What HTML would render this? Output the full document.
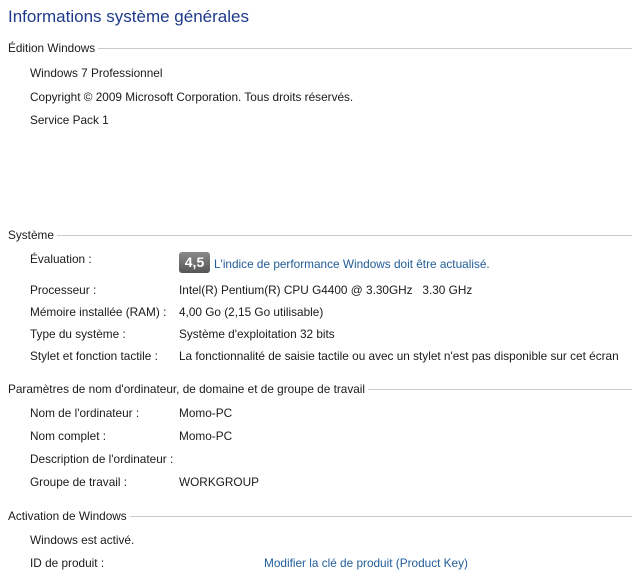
<!DOCTYPE html>
<html><head><meta charset="utf-8"><style>
body{margin:0;width:632px;height:584px;background:#fff;position:relative;overflow:hidden;font-family:"Liberation Sans",sans-serif;font-size:11.8px;color:#1a1a1a}
div{position:absolute;white-space:nowrap;line-height:14px}
.t{left:8px;top:6px;font-size:17px;color:#1e3a8a;line-height:22px}
.h{left:8px;background:#fff;padding-right:3px}
.ln{left:8px;right:0;height:1px;background:#c9ccd2}
.l{left:30px}.v{left:179px}
.a{color:#1f5c99}
.badge{left:179px;top:252px;width:31px;height:21px;background:linear-gradient(#8a8a8a,#555);border-radius:3px;color:#fff;font-weight:bold;font-size:14px;line-height:21px;text-align:center}
</style></head><body>
<div class="t">Informations système générales</div>
<div class="ln" style="top:48px"></div><div class="h" style="top:41px">Édition Windows</div>
<div class="l" style="top:66px">Windows 7 Professionnel</div>
<div class="l" style="top:90px">Copyright © 2009 Microsoft Corporation. Tous droits réservés.</div>
<div class="l" style="top:113px">Service Pack 1</div>
<div class="ln" style="top:235px"></div><div class="h" style="top:228px">Système</div>
<div class="l" style="top:252px">Évaluation :</div>
<div class="badge">4,5</div>
<div class="v a" style="left:214px;top:257px">L'indice de performance Windows doit être actualisé.</div>
<div class="l" style="top:283px">Processeur :</div><div class="v" style="top:283px">Intel(R) Pentium(R) CPU G4400 @ 3.30GHz&nbsp;&nbsp;&nbsp;3.30 GHz</div>
<div class="l" style="top:305px">Mémoire installée (RAM) :</div><div class="v" style="top:305px">4,00 Go (2,15 Go utilisable)</div>
<div class="l" style="top:327px">Type du système :</div><div class="v" style="top:327px">Système d'exploitation 32 bits</div>
<div class="l" style="top:349px">Stylet et fonction tactile :</div><div class="v" style="top:349px">La fonctionnalité de saisie tactile ou avec un stylet n'est pas disponible sur cet écran</div>
<div class="ln" style="top:389px"></div><div class="h" style="top:382px">Paramètres de nom d'ordinateur, de domaine et de groupe de travail</div>
<div class="l" style="top:406px">Nom de l'ordinateur :</div><div class="v" style="top:406px">Momo-PC</div>
<div class="l" style="top:429px">Nom complet :</div><div class="v" style="top:429px">Momo-PC</div>
<div class="l" style="top:452px">Description de l'ordinateur :</div>
<div class="l" style="top:475px">Groupe de travail :</div><div class="v" style="top:475px">WORKGROUP</div>
<div class="ln" style="top:516px"></div><div class="h" style="top:509px">Activation de Windows</div>
<div class="l" style="top:533px">Windows est activé.</div>
<div class="l" style="top:556px">ID de produit :</div><div class="v a" style="left:264px;top:556px">Modifier la clé de produit (Product Key)</div>
</body></html>
